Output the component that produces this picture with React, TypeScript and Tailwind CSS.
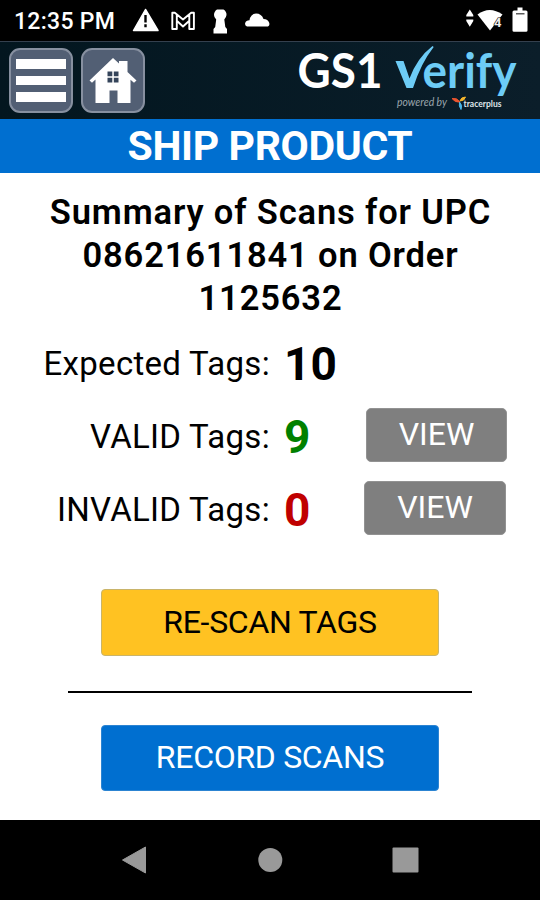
import React from 'react';

const roboto = "font-[Roboto,'Liberation_Sans',sans-serif]";

function StatusBar() {
  return (
    <div className="flex h-[41px] shrink-0 bg-black text-white">
      <span className="w-[132px] shrink-0 whitespace-nowrap pl-[14px] pt-[6px] text-[23px] font-medium leading-8 tracking-[0.3px]">12:35 PM</span>
      <svg className="h-[41px] w-[408px] shrink-0" viewBox="132 0 408 41" fill="#fff">
        <path d="M145.500 9.500 L158 30.500 H133.500 Z" stroke="#fff" strokeWidth="1.500" strokeLinejoin="round" />
        <path d="M145.500 15v7.500M145.500 24.300v3" stroke="#000" strokeWidth="2.400" />
        <path d="M172.300 29V12.800h2.500l8.200 6.700 8.200-6.700h2.700V29h-4.600v-8.200L183 26.500l-6.200-5.700V29zM176.800 20.800v-6M189.300 20.800v-6" fill="none" stroke="#fff" strokeWidth="1.900" strokeLinejoin="round" />
        <path d="M217 9.500h6.500q3.200 2 3 5.500-.3 2.500-2.200 4.500l1 7.500 1.700 2v4.500h-13.500v-4.500l1.700-2 1-7.500q-2.200-2-2.200-4.500 0-3.500 3-5.500z" />
        <path d="M247 26.500q-2.500-1-1.800-3.500.8-2.500 4.300-2.700 1-6.300 6.500-6.800 5.500 0 7.500 5.500 4.500.1 5.700 3.800.8 2.700-1.200 3.700z" />
        <path d="M469.800 9.500l3.500 5.500v1.500h-7V15zM466.300 19.500h7V21l-3.500 5.800-3.500-5.800z" />
        <path d="M477.500 14.500q12-9 25 0L490 30.500z" />
        <text x="494" y="27" fontFamily="Roboto, sans-serif" fontSize="13" fontWeight="700" fill="#eee" stroke="#000" strokeWidth="1.200" paintOrder="stroke">4</text>
        <path d="M514 10.500h3.500v-3h5v3h3.500q1.500 0 1.500 1.500v18.500q0 1.300-1.500 1.300h-12q-1.500 0-1.500-1.300V12q0-1.500 1.500-1.500z" />
        <path d="M516 13.800h8.500" stroke="#333" strokeWidth="1.200" />
      </svg>
    </div>
  );
}

function AppHeader() {
  return (
    <header className="flex h-[78px] shrink-0 border-t border-[#34404e] bg-linear-to-r from-[#03161f] to-[#0b1e2a] pl-[9px] pt-[6px]">
      <button aria-label="Menu" className="flex h-[65px] w-[64px] shrink-0 flex-col justify-center gap-[7px] rounded-[11px] border-2 border-[#8790a0] bg-[#525f74] px-[5px]">
        <span className="h-[9.500px] bg-white" />
        <span className="h-[9.500px] bg-white" />
        <span className="h-[9.500px] bg-white" />
      </button>
      <button aria-label="Home" className="ml-2 flex h-[65px] w-[64px] shrink-0 items-center justify-center rounded-[11px] border-2 border-[#8790a0] bg-[#525f74]">
        <svg className="h-[61px] w-[60px]" viewBox="83 50 60 61">
          <path d="M89.500 80.500L113 58l6 5.500V61h8.500v11l9 8.500-2.500 2.200-3.500-3V103H117.500V90.500h-8V103h-14V79.500l-3.500 3.200z" fill="#fff" />
          <path d="M107.500 71.500h4.800v4.800h-4.800zM113.800 71.500h4.700v4.800h-4.700zM107.500 77.800h4.800v4.700h-4.800zM113.800 77.800h4.700v4.700h-4.700z" fill="#34445a" />
        </svg>
      </button>
      <svg className="-mt-[6px] ml-auto h-[77px] w-[260px] shrink-0" viewBox="280 42 260 77">
        <text x="297.500" y="88" fontFamily="Lato, sans-serif" fontSize="48" fontWeight="700" fill="#fff" textLength="85" lengthAdjust="spacingAndGlyphs">GS1</text>
        <path d="M395.500 61h8l6 17.500Q417 58 432.500 46l1.200 1Q421 63 413 88h-6.500z" fill="#6dccf6" />
        <text x="422.500" y="88" fontFamily="Lato, sans-serif" fontSize="48" fontWeight="700" fill="#6dccf6" textLength="94" lengthAdjust="spacingAndGlyphs">erify</text>
        <text x="397" y="106" fontFamily="Lato, sans-serif" fontSize="11" fontStyle="italic" fill="#9ba6ad" textLength="50" lengthAdjust="spacingAndGlyphs">powered by</text>
        <path d="M452 98.500q5-1 8 3.500-5 .8-8-3.500z" fill="#e9542f" stroke="#e9542f" />
        <path d="M460 101q1-4 5.500-4-1 4-5.500 4z" fill="#f5b62d" stroke="#f5b62d" />
        <path d="M459.500 102q-1 4 1.500 7.500 2-4-1.500-7.500z" fill="#4ab6e8" stroke="#4ab6e8" />
        <text x="463.500" y="107.300" fontFamily="Lato, sans-serif" fontSize="9" fontWeight="700" fill="#dfe5e8" textLength="38" lengthAdjust="spacingAndGlyphs">tracerplus</text>
      </svg>
    </header>
  );
}

type RowProps = { label: string; value: string; color: string; view?: string };

function TagRow({ label, value, color, view }: RowProps) {
  return (
    <div className="flex h-[73px] items-center">
      <span className="w-[270px] shrink-0 whitespace-nowrap text-right text-[33px] leading-[54px] tracking-[0.300px]">{label}</span>
      <span className={`w-[81px] shrink-0 pl-[14px] text-[46px] font-bold leading-[54px] ${color}`}>{value}</span>
      {view && (
        <button className={`mb-[3px] h-[54px] shrink-0 rounded-[5px] border border-[#929292] bg-[#7f7f7f] pb-[2px] text-[32px] leading-none text-white ${view}`}>VIEW</button>
      )}
    </div>
  );
}

function NavBar() {
  return (
    <nav className="h-[80px] shrink-0 bg-black">
      <svg className="h-[80px] w-[540px]" viewBox="0 820 540 80" fill="#999">
        <path d="M122.500 860L145.500 847v26z" stroke="#999" strokeLinejoin="round" />
        <circle cx="270.300" cy="860" r="12" />
        <rect x="392.500" y="847.500" width="26" height="25" rx="1" />
      </svg>
    </nav>
  );
}

export default function App() {
  return (
    <div className={`flex h-[900px] w-[540px] flex-col overflow-hidden bg-white text-black ${roboto}`}>
      <StatusBar />
      <AppHeader />
      <div className="flex h-[54px] shrink-0 items-center justify-center bg-[#006fd0] text-[41px] font-bold leading-none tracking-[-0.350px] text-white">SHIP PRODUCT</div>
      <main className="flex h-[647px] shrink-0 flex-col">
        <h1 className="mt-[18px] h-[129px] pl-[1px] text-center text-[34.500px] font-semibold leading-[43px] tracking-[0.850px]">
          Summary of Scans for UPC<br />08621611841 on Order<br />1125632
        </h1>
        <div className="mt-[7px] flex flex-col">
          <TagRow label="Expected Tags:" value="10" color="text-black" />
          <TagRow label="VALID Tags:" value="9" color="text-[#008000]" view="ml-[15px] w-[141px]" />
          <TagRow label="INVALID Tags:" value="0" color="text-[#c00000]" view="ml-[13px] w-[142px]" />
        </div>
        <button className="mt-[43px] h-[67px] w-[338px] shrink-0 self-center rounded-[4px] border border-[#c9b46a] bg-[#ffc222] pb-[2px] text-[32px] leading-none tracking-[-0.300px]">RE-SCAN TAGS</button>
        <div className="mt-[35px] h-[2px] w-[404px] shrink-0 self-center bg-black" />
        <button className="mt-[32px] h-[66px] w-[338px] shrink-0 self-center rounded-[4px] border border-[#2c84d2] bg-[#006fd0] pb-[2px] text-[32px] leading-none tracking-[-0.300px] text-white">RECORD SCANS</button>
      </main>
      <NavBar />
    </div>
  );
}
